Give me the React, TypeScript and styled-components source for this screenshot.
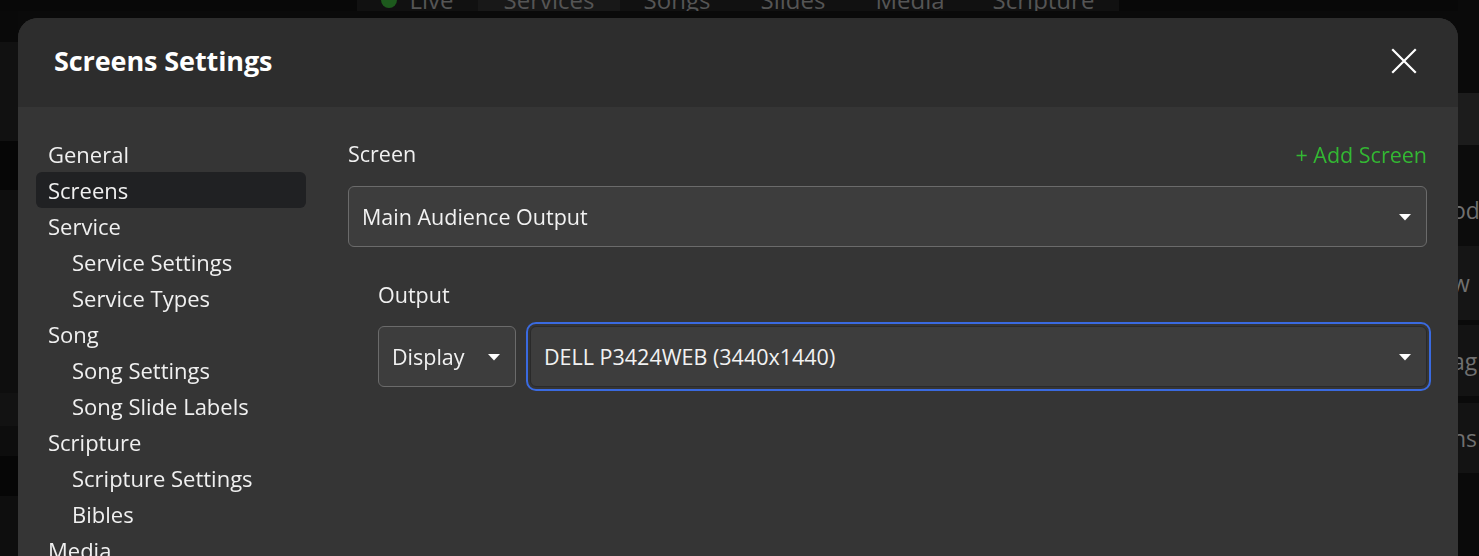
import React from "react";
import styled, { createGlobalStyle } from "styled-components";

const GlobalStyle = createGlobalStyle`
  html, body {
    margin: 0;
    padding: 0;
    height: 100%;
    overflow: hidden;
    background: #0a0a0a;
  }
  body {
    font-family: "Open Sans", "Noto Sans", sans-serif;
  }
  * { box-sizing: border-box; }
`;

const tabs = [
  { label: "Live", w: 121 },
  { label: "Services", w: 142 },
  { label: "Songs", w: 114 },
  { label: "Slides", w: 118 },
  { label: "Media", w: 116 },
  { label: "Scripture", w: 151 },
];
const leftBands = [
  { h: 31, c: "#090909" },
  { h: 99, c: "#111111" },
  { h: 49, c: "#060606" },
  { h: 203, c: "#0e0e0e" },
  { h: 33, c: "#121212" },
  { h: 30, c: "#0d0d0d" },
  { h: 40, c: "#060606" },
  { h: 60, c: "#0e0e0e" },
];
const rightRows = [
  { h: 100, c: "#0a0a0a", t: "" },
  { h: 52, c: "#1c1c1c", t: "" },
  { h: 28, c: "#0c0c0c", t: "" },
  { h: 73, c: "#0c0c0c", t: "od" },
  { h: 74, c: "#151515", t: "w" },
  { h: 5, c: "#0a0a0a", t: "" },
  { h: 71, c: "#131313", t: "ag" },
  { h: 7, c: "#0a0a0a", t: "" },
  { h: 70, c: "#131313", t: "hs" },
  { h: 80, c: "#0a0a0a", t: "" },
];

const nav = [
  { label: "General" },
  { label: "Screens", active: true },
  { label: "Service" },
  { label: "Service Settings", indent: true },
  { label: "Service Types", indent: true },
  { label: "Song" },
  { label: "Song Settings", indent: true },
  { label: "Song Slide Labels", indent: true },
  { label: "Scripture" },
  { label: "Scripture Settings", indent: true },
  { label: "Bibles", indent: true },
  { label: "Media" },
  { label: "Media Settings", indent: true },
];

function Caret() {
  return (
    <CaretIcon width="12" height="7" viewBox="0 0 12 7">
      <polygon points="0,0 12,0 6,6.5" fill="#ffffff" />
    </CaretIcon>
  );
}

function App() {
  return (
    <>
      <GlobalStyle />
      <Backdrop>
        <TopBar>
          <TabGroup>
            {tabs.map((t, i) => (
              <Tab key={t.label} $active={i === 1} $w={t.w}>
                <TabText>
                  {i === 0 && <LiveDot />}
                  {t.label}
                </TabText>
              </Tab>
            ))}
          </TabGroup>
        </TopBar>
        <BackBody>
          <LeftStrip>
            {leftBands.map((b, i) => (
              <Band key={i} style={{ height: b.h, background: b.c }} />
            ))}
          </LeftStrip>
          <RightStrip>
            {rightRows.map((r, i) => (
              <Band key={i} style={{ height: r.h, background: r.c }}>
                {r.t && <BackText>{r.t}</BackText>}
              </Band>
            ))}
          </RightStrip>
        </BackBody>
      </Backdrop>

      <Modal>
        <Header>
          <Title>Screens Settings</Title>
          <CloseButton aria-label="Close">
            <svg width="26" height="26" viewBox="0 0 26 26">
              <path
                d="M2 2 L24 24 M24 2 L2 24"
                stroke="#ffffff"
                strokeWidth="2.2"
                strokeLinecap="square"
              />
            </svg>
          </CloseButton>
        </Header>
        <Body>
          <Sidebar>
            {nav.map((n) => (
              <NavItem key={n.label} $active={n.active} $indent={n.indent}>
                {n.label}
              </NavItem>
            ))}
          </Sidebar>
          <Content>
            <LabelRow>
              <Label>Screen</Label>
              <AddLink>+ Add Screen</AddLink>
            </LabelRow>
            <Select>
              <span>Main Audience Output</span>
              <Caret />
            </Select>
            <SubSection>
              <Label>Output</Label>
              <OutputRow>
                <Select $compact>
                  <span>Display</span>
                  <Caret />
                </Select>
                <Select $focused $grow>
                  <span>DELL P3424WEB (3440x1440)</span>
                  <Caret />
                </Select>
              </OutputRow>
            </SubSection>
          </Content>
        </Body>
      </Modal>
    </>
  );
}

export default App;

const Backdrop = styled.div`
  height: 100vh;
  display: flex;
  flex-direction: column;
  background: #0a0a0a;
`;

const TopBar = styled.div`
  height: 18px;
  display: flex;
  padding-left: 357px;
  background: #080808;
  overflow: hidden;
`;

const TabGroup = styled.div`
  display: flex;
  background: #111111;
`;

const Tab = styled.div<{ $active?: boolean; $w: number }>`
  height: 18px;
  width: ${(p) => p.$w}px;
  background: ${(p) => (p.$active ? "#181818" : "transparent")};
  display: flex;
  justify-content: center;
  overflow: hidden;
`;

const TabText = styled.div`
  margin-top: -18px;
  line-height: 36px;
  font-size: 24px;
  color: #555555;
  display: flex;
  align-items: center;
  gap: 12px;
  white-space: nowrap;
`;

const LiveDot = styled.span`
  width: 16px;
  height: 16px;
  border-radius: 50%;
  background: #1d5a1d;
`;

const BackBody = styled.div`
  flex: 1;
  display: flex;
  justify-content: space-between;
`;

const LeftStrip = styled.div`
  width: 18px;
  display: flex;
  flex-direction: column;
`;

const RightStrip = styled.div`
  width: 21px;
  display: flex;
  flex-direction: column;
  margin-top: -18px;
`;

const Band = styled.div`
  display: flex;
  align-items: center;
  overflow: hidden;
  flex-shrink: 0;
`;

const BackText = styled.span`
  font-size: 23px;
  color: #707070;
  margin-left: -6px;
  white-space: nowrap;
`;

const Modal = styled.div`
  position: fixed;
  top: 18px;
  left: 18px;
  width: 1440px;
  height: 620px;
  border-radius: 20px;
  overflow: hidden;
  background: #353535;
  display: flex;
  flex-direction: column;
`;

const Header = styled.div`
  height: 89px;
  flex-shrink: 0;
  background: #2d2d2d;
  display: flex;
  align-items: center;
  justify-content: space-between;
  padding: 0 41px 4px 36px;
`;

const Title = styled.h2`
  margin: 0;
  font-size: 27px;
  font-weight: 700;
  color: #ffffff;
  letter-spacing: -0.1px;
`;

const CloseButton = styled.button`
  background: none;
  border: none;
  padding: 0;
  width: 26px;
  height: 26px;
  display: flex;
  cursor: pointer;
`;

const Body = styled.div`
  flex: 1;
  display: flex;
  padding: 29px 31px 0 18px;
  gap: 42px;
`;

const Sidebar = styled.nav`
  width: 270px;
  flex-shrink: 0;
  display: flex;
  flex-direction: column;
`;

const NavItem = styled.div<{ $active?: boolean; $indent?: boolean }>`
  height: 36px;
  line-height: 36px;
  padding-left: ${(p) => (p.$indent ? "36px" : "12px")};
  font-size: 22px;
  color: #f0f0f0;
  border-radius: 6px;
  background: ${(p) => (p.$active ? "#202123" : "transparent")};
  white-space: nowrap;
`;

const Content = styled.div`
  flex: 1;
  display: flex;
  flex-direction: column;
`;

const LabelRow = styled.div`
  height: 36px;
  display: flex;
  align-items: center;
  justify-content: space-between;
  margin-bottom: 14px;
`;

const Label = styled.div`
  font-size: 21.5px;
  color: #f0f0f0;
  line-height: 36px;
`;

const AddLink = styled.a`
  font-size: 21.5px;
  color: #33b833;
  cursor: pointer;
`;

const Select = styled.div<{ $compact?: boolean; $focused?: boolean; $grow?: boolean }>`
  height: 61px;
  display: flex;
  align-items: center;
  justify-content: space-between;
  gap: 12px;
  padding: 0 15px 0 13px;
  width: ${(p) => (p.$compact ? "138px" : "auto")};
  flex: ${(p) => (p.$grow ? "1" : "none")};
  background: #3d3d3d;
  border: 1px solid ${(p) => (p.$focused ? "#2a2a2a" : "#6b6b6b")};
  border-radius: 6px;
  font-size: 21.5px;
  color: #f2f2f2;
  white-space: nowrap;
  ${(p) =>
    p.$focused &&
    `
    outline: 2px solid #3a6ae0;
    outline-offset: 2px;
  `}
`;

const CaretIcon = styled.svg`
  flex-shrink: 0;
  margin-top: 2px;
`;

const SubSection = styled.div`
  padding: 30px 0 0 30px;
  display: flex;
  flex-direction: column;
`;

const OutputRow = styled.div`
  display: flex;
  gap: 14px;
  margin-top: 13px;
`;
